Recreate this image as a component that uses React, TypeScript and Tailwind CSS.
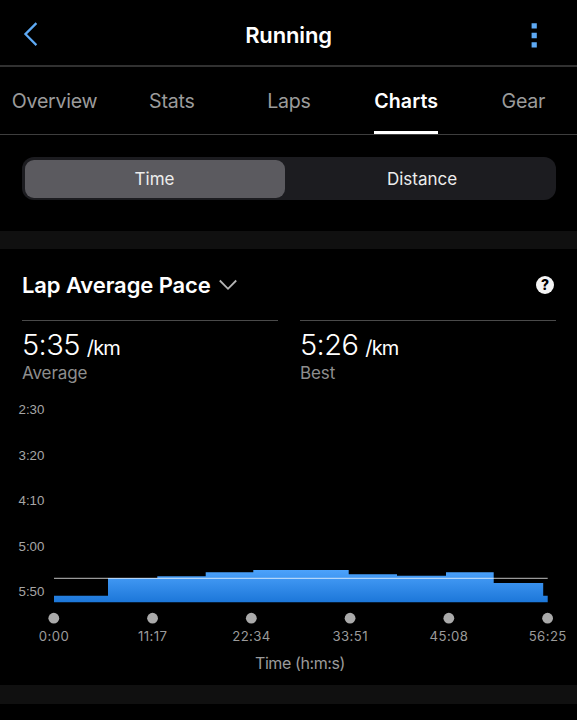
import { useState } from 'react'

const TABS = ['Overview', 'Stats', 'Laps', 'Charts', 'Gear']
const PACE_TICKS = ['2:30', '3:20', '4:10', '5:00', '5:50']
const TIME_TICKS = ['0:00', '11:17', '22:34', '33:51', '45:08', '56:25']

// [start, end, top] of every lap, in chart units
const LAPS = [
  [0, 54, 195.7],
  [54, 103.3, 178],
  [103.3, 151.7, 176.3],
  [151.7, 199.3, 172.3],
  [199.3, 294.7, 170],
  [294.7, 343, 174.3],
  [343, 392, 175.7],
  [392, 439.7, 172.3],
  [439.7, 489.2, 183],
  [489.2, 493.7, 195.7],
]

const LAP_PATH = `M0 202.3${LAPS.map(([x1, x2, y]) => `L${x1} ${y}L${x2} ${y}`).join('')}L493.7 202.3Z`

function Header() {
  return (
    <header className="flex h-[67px] items-center justify-between border-b-2 border-[#313131] px-[22px] pt-1">
      <button aria-label="Back" className="w-10 pb-[2px]">
        <svg width="18" height="26" viewBox="0 0 18 26" fill="none" stroke="#5eaaf5" strokeWidth="2.2">
          <path d="M14.4 2.1 3.4 13.1l11 11" />
        </svg>
      </button>
      <h1 className="text-[22px] leading-7 font-semibold tracking-[-0.15px] text-white">Running</h1>
      <button aria-label="More" className="w-10">
        <svg className="ml-[16px]" width="6" height="26" viewBox="0 0 6 26" fill="#5eaaf5">
          <path d="M.6 1.2h5.2v5.4H.6zM.6 10.8h5.2v5.4H.6zM.6 20.2h5.2v5.4H.6z" />
        </svg>
      </button>
    </header>
  )
}

function TabBar() {
  const [active, setActive] = useState('Charts')

  return (
    <nav className="h-[68px] overflow-hidden border-b border-[#3e3e3e]">
      <div className="-ml-1 grid h-full w-[586px] grid-cols-5 justify-items-center">
        {TABS.map((label) => (
          <button
            key={label}
            onClick={() => setActive(label)}
            className={`h-full border-b-3 pt-[3px] text-[19.6px] leading-6 whitespace-nowrap ${
              active === label
                ? 'border-white font-semibold tracking-[0.1px] text-white'
                : 'border-transparent tracking-[-0.25px] text-[#9b9b9b]'
            }`}
          >
            {label}
          </button>
        ))}
      </div>
    </nav>
  )
}

function Stat({ value, label }: { value: string; label: string }) {
  return (
    <div className="border-t border-[#4a4a4a]">
      <p className="mt-[5px] flex h-[37px] items-baseline gap-[7px] text-white">
        <span className="text-[29px] leading-[38px] font-[350] tracking-[-0.6px]">{value}</span>
        <span className="text-[20px] tracking-[-0.8px]">/km</span>
      </p>
      <p className="text-[17px] leading-5 tracking-[-0.1px] text-[#8e8e8e]">{label}</p>
    </div>
  )
}

function PaceChart() {
  return (
    <div className="mt-[17px]">
      <div className="flex">
        <ul className="w-[44.4px] text-right font-['Liberation_Sans',Arial,sans-serif] text-[13.3px] text-[#a6a6a6]">
          {PACE_TICKS.map((tick) => (
            <li key={tick} className="h-[45.5px] leading-5">{tick}</li>
          ))}
        </ul>
        <svg className="ml-[9.6px] h-[228px] w-[500px]" viewBox="0 0 500 228" overflow="visible">
          <defs>
            <linearGradient id="pace" gradientUnits="userSpaceOnUse" x1="0" y1="170" x2="0" y2="202">
              <stop offset="0" stopColor="#4ca2fb" />
              <stop offset="1" stopColor="#1c77d9" />
            </linearGradient>
          </defs>
          <path d={LAP_PATH} fill="url(#pace)" />
          <path d="M0 178.4H493.7" stroke="#fff" strokeOpacity="0.6" strokeWidth="1.1" />
          {TIME_TICKS.map((tick, i) => (
            <circle key={tick} cx={-0.2 + i * 98.76} cy="218.2" r="5.4" fill="#aaa" />
          ))}
        </svg>
      </div>
      <div className="ml-[4.6px] flex text-[13.2px] leading-4 tracking-[0.4px] text-[#9b9b9b]">
        {TIME_TICKS.map((tick) => (
          <span key={tick} className="w-[98.76px] shrink-0 text-center">{tick}</span>
        ))}
      </div>
      <p className="mt-[9px] ml-[23px] text-center text-[16px] leading-5 tracking-[-0.4px] text-[#9b9b9b]">
        Time (h:m:s)
      </p>
    </div>
  )
}

export default function App() {
  return (
    <main className="h-[720px] w-[577px] overflow-hidden bg-black font-['Inter',sans-serif]">
      <Header />
      <TabBar />

      <div className="mx-[22px] mt-[22px] flex h-[43px] w-[534px] rounded-xl bg-[#1c1c20] p-[2.5px] text-[17px] text-[#ededed]">
        <button className="w-[260px] rounded-[9px] bg-[#5b5a5f] pt-[2px]">Time</button>
        <button className="flex-1 pt-[2px] pl-[6px]">Distance</button>
      </div>

      <div className="mt-[31px] h-[18px] bg-[#101010]" />

      <section className="h-[436px] overflow-hidden">
        <div className="flex h-[71px] items-center justify-between pr-[23px] pl-[22px]">
          <button className="flex items-center gap-[8.5px] text-[22px] leading-7 font-semibold tracking-[-0.1px] text-white">
            <span>Lap Average Pace</span>
            <svg width="18" height="12" viewBox="0 0 18 12" fill="none" stroke="#b5b5b5" strokeWidth="1.8">
              <path d="m.8 1.5 8.2 8.3 8.2-8.3" />
            </svg>
          </button>
          <button
            aria-label="Help"
            className="flex h-[18px] w-[18px] items-center justify-center rounded-full bg-[#f5f5f5] text-[14px] font-extrabold text-black"
          >
            ?
          </button>
        </div>

        <div className="grid w-[556px] grid-cols-2 gap-[22px] pl-[22px]">
          <Stat value="5:35" label="Average" />
          <Stat value="5:26" label="Best" />
        </div>

        <PaceChart />
      </section>

      <div className="h-[19px] bg-[#101010]" />
    </main>
  )
}
